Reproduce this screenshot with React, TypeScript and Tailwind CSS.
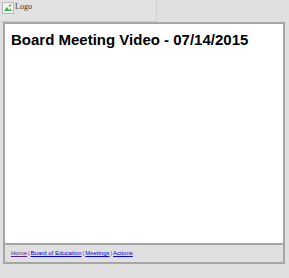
import React from 'react';

const BrokenImage = () => (
  <svg width="12" height="12" viewBox="0 0 12 12" className="shrink-0">
    <rect x="0.5" y="0.5" width="11" height="11" fill="#f4f4f4" stroke="#b8b8b8" />
    <path d="M2 9 L5 5 L7 8 L8.5 6.5 L10 9 Z" fill="#4caf50" />
    <circle cx="8" cy="3.5" r="1.2" fill="#7cb342" />
  </svg>
);

const App = () => {
  return (
    <div className="min-h-[278px] w-[289px] bg-[#e0e0e0] font-['Liberation_Sans',Arial,sans-serif]">
      <div className="h-[22px] w-[157px] border-b border-r border-[#cfcfcf] bg-[#e2e2e2] flex items-start pt-[2px] pl-[2px] gap-[1px]">
        <BrokenImage />
        <span className="font-['Liberation_Serif',serif] text-[8px] leading-[10px] text-[#333]">Logo</span>
      </div>
      <div className="mx-[3px] w-[282px] border-2 border-[#a6a6a6] bg-white">
        <div className="h-[219px] px-[6px] pt-[7px]">
          <h1 className="text-[15px] font-bold leading-[18px] text-black">Board Meeting Video - 07/14/2015</h1>
        </div>
        <div className="h-[19px] border-t-2 border-[#a6a6a6] bg-[#e0e0e0] pl-[6px] flex items-center text-[6px] text-[#555]">
          <a href="#" className="underline text-[#551a8b]">Home</a>
          <span className="px-[1px]">|</span>
          <a href="#" className="underline text-[#0000ee]">Board of Education</a>
          <span className="px-[1px]">|</span>
          <a href="#" className="underline text-[#0000ee]">Meetings</a>
          <span className="px-[1px]">|</span>
          <a href="#" className="underline text-[#0000ee]">Actions</a>
        </div>
      </div>
    </div>
  );
};

export default App;
